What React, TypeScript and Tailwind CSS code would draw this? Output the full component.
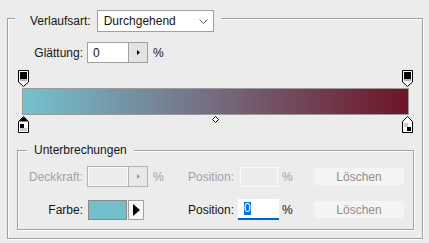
import React from "react";

function Arrow({ color = "#000", w = 3, h = 5 }: { color?: string; w?: number; h?: number }) {
  return (
    <svg width={w} height={h} viewBox={`0 0 ${w} ${h}`}>
      <polygon points={`0,0 ${w},${h / 2} 0,${h}`} fill={color} />
    </svg>
  );
}

function TopStop() {
  return (
    <svg width="11" height="17" viewBox="0 0 11 17">
      <path d="M0.5 0.5 H10.5 V12 L5.5 16.5 L0.5 12 Z" fill="#fff" stroke="#000" />
      <rect x="2" y="2" width="7" height="7" fill="#000" />
      <rect x="2" y="9" width="7" height="2" fill="#b4b4b4" />
    </svg>
  );
}

function BottomStop({ active }: { active?: boolean }) {
  return (
    <svg width="11" height="17" viewBox="0 0 11 17">
      <path d="M5.5 0.5 L10.5 5.5 V16.5 H0.5 V5.5 Z" fill="#fff" stroke="#000" />
      {active ? (
        <>
          <polygon points="5.5,1 10,5.5 1,5.5" fill="#000" />
          <rect x="2" y="8" width="4" height="4" fill="#000" />
          <rect x="2" y="12" width="7" height="3" fill="#c8c8c8" />
        </>
      ) : (
        <>
          <rect x="2" y="7" width="4" height="4" fill="#c8c8c8" />
          <rect x="5" y="11" width="4" height="4" fill="#000" />
        </>
      )}
    </svg>
  );
}

function Spin({ value, disabled }: { value?: string; disabled?: boolean }) {
  return (
    <div className={`flex h-[21px] w-[61px] border ${disabled ? "border-[#b4b4b4]" : "border-[#a0a0a0]"}`}>
      <div
        className={`flex h-full w-[40px] items-center pl-[5px] ${
          disabled ? "bg-[#ececec] shadow-[inset_1px_1px_0_#fafafa,inset_-1px_-1px_0_#fafafa]" : "bg-white"
        }`}
      >
        {value}
      </div>
      <div
        className={`flex flex-1 items-center justify-center border-l ${
          disabled ? "border-[#b4b4b4] bg-[#e8e8e8]" : "border-[#a0a0a0] bg-[#e3e3e3]"
        }`}
      >
        <Arrow color={disabled ? "#9a9a9a" : "#000"} />
      </div>
    </div>
  );
}

function DeleteButton() {
  return (
    <div className="flex h-[17px] w-[90px] items-center justify-center rounded-[3px] bg-[#f4f4f4] text-[#8f8f8f]">
      Löschen
    </div>
  );
}

export default function App() {
  return (
    <div className="h-[243px] w-[429px] overflow-hidden bg-[#ececec] pl-[7px] pt-[18px] font-['Liberation_Sans',Arial,sans-serif] text-[12px] leading-[14px] text-[#151515]">
      <div className="h-[221px] w-[416px] border border-[#a0a0a0] shadow-[inset_1px_1px_0_#fff,1px_1px_0_#fff]">
        {/* Verlaufsart */}
        <div className="-mt-[9px] ml-[7px] flex w-fit items-center bg-[#ececec] pl-[15px] pr-[7px]">
          <span>Verlaufsart:</span>
          <div className="ml-[6px] flex h-[22px] w-[117px] items-center justify-between border border-[#a0a0a0] bg-white pl-[6px] pr-[5px]">
            <span>Durchgehend</span>
            <svg width="9" height="5" viewBox="0 0 9 5">
              <path d="M0.5 0.5 L4.5 4.5 L8.5 0.5" stroke="#5a5a5a" fill="none" />
            </svg>
          </div>
        </div>

        {/* Glättung */}
        <div className="mt-[10px] flex h-[21px] items-center">
          <span className="w-[75px] text-right">Glättung:</span>
          <div className="ml-[4px]">
            <Spin value="0" />
          </div>
          <span className="ml-[5px]">%</span>
        </div>

        {/* Gradient */}
        <div className="ml-[14px] mt-[7px] w-[387px]">
          <div className="relative h-[17px]">
            <div className="absolute left-[-4px] top-0 flex">
              <TopStop />
            </div>
            <div className="absolute right-[-4px] top-0 flex">
              <TopStop />
            </div>
          </div>
          <div className="mt-[1px] h-[27px] border border-[#9a9a9a] bg-[linear-gradient(to_right,#74c2cf,#756b7f,#6e1426)]" />
          <div className="relative mt-[1px] h-[17px]">
            <div className="absolute left-[-4px] top-0 flex">
              <BottomStop active />
            </div>
            <div className="absolute left-[190px] top-0 flex">
              <svg width="7" height="7" viewBox="0 0 7 7">
                <path d="M3.5 0.5 L6.5 3.5 L3.5 6.5 L0.5 3.5 Z" fill="#fff" stroke="#000" />
              </svg>
            </div>
            <div className="absolute right-[-4px] top-0 flex">
              <BottomStop />
            </div>
          </div>
        </div>

        {/* Unterbrechungen */}
        <div className="ml-[9px] mt-[17px] h-[80px] w-[397px] border border-[#a0a0a0] shadow-[inset_1px_1px_0_#fff,1px_1px_0_#fff]">
          <div className="-mt-[9px] ml-[9px] h-[17px] w-fit bg-[#ececec] px-[7px] leading-[17px]">Unterbrechungen</div>

          <div className="mt-[7px] flex h-[21px] items-center text-[#a3a3a3]">
            <span className="w-[65px] text-right">Deckkraft:</span>
            <div className="ml-[4px]">
              <Spin disabled />
            </div>
            <span className="ml-[5px] w-[35px]">%</span>
            <span className="w-[50px]">Position:</span>
            <div className="ml-[2px] h-[20px] w-[38px] border border-[#f8f8f8]" />
            <span className="ml-[4px] w-[32px]">%</span>
            <DeleteButton />
          </div>

          <div className="mt-[12px] flex h-[21px] items-center">
            <span className="w-[65px] text-right">Farbe:</span>
            <div className="ml-[5px] h-[20px] w-[39px] border border-[#8a8a8a] bg-[#72bfcb]" />
            <div className="ml-[1px] flex h-[20px] w-[16px] items-center justify-center border border-[#a0a0a0] bg-[#f6f6f6]">
              <Arrow w={7} h={12} />
            </div>
            <span className="ml-[44px] w-[50px]">Position:</span>
            <div className="flex h-[21px] w-[41px] items-center border-b-2 border-[#0067c0] bg-white pl-[6px]">
              <span className="bg-[#0078d7] leading-[13px] text-white">0</span>
            </div>
            <span className="ml-[3px] w-[32px]">%</span>
            <DeleteButton />
          </div>
        </div>
      </div>
    </div>
  );
}
